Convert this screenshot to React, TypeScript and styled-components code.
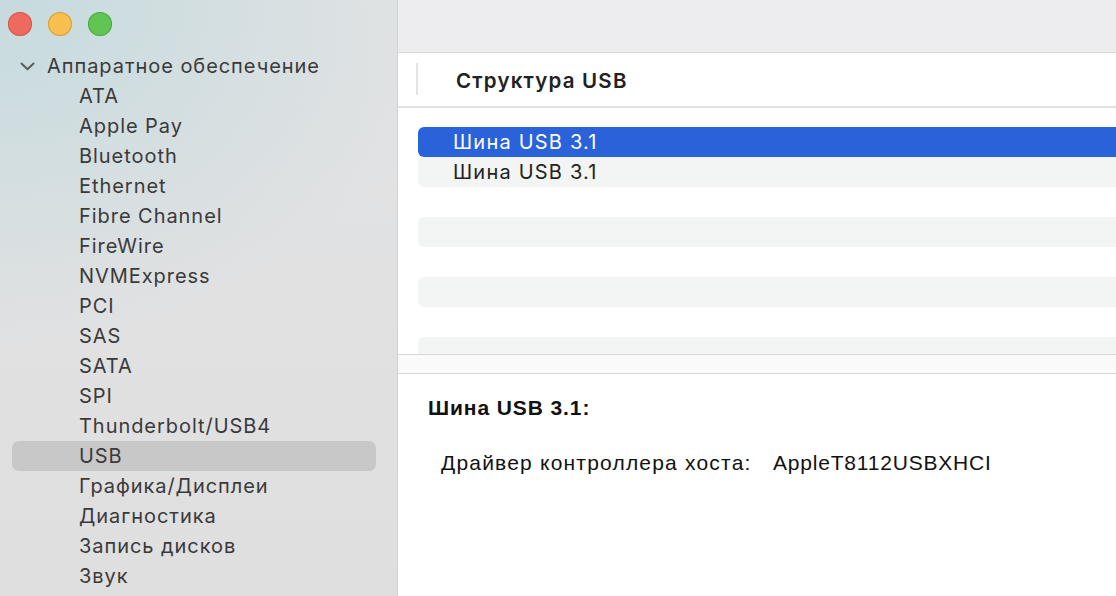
import React from "react";
import styled, { createGlobalStyle } from "styled-components";

const Global = createGlobalStyle`
  html, body { margin: 0; padding: 0; width: 1116px; height: 596px; overflow: hidden; }
  body { font-family: Inter, "Noto Sans", sans-serif; -webkit-font-smoothing: antialiased; }
  #root { width: 1116px; height: 596px; }
`;

const Window = styled.div`
  display: flex;
  width: 1116px;
  height: 596px;
  overflow: hidden;
  background: #fff;
`;

const Sidebar = styled.aside`
  width: 397px;
  flex: none;
  border-right: 1px solid #d2d2d3;
  background:
    radial-gradient(ellipse 440px 340px at 0% 0%, rgba(196, 218, 222, 0.95), rgba(196, 218, 222, 0) 100%),
    linear-gradient(180deg, #e2e3e4 0%, #dfdfe0 100%);
  display: flex;
  flex-direction: column;
`;

const Lights = styled.div`
  display: flex;
  gap: 16px;
  padding: 12px 0 0 8px;
  height: 51px;
  box-sizing: border-box;
  flex: none;
`;

const Light = styled.span<{ $c: string; $b: string }>`
  width: 24px;
  height: 24px;
  border-radius: 50%;
  background: ${(p) => p.$c};
  box-shadow: inset 0 0 0 1px ${(p) => p.$b};
`;

const GroupRow = styled.div`
  height: 30px;
  flex: none;
  display: flex;
  align-items: center;
  padding-left: 20px;
  gap: 12px;
  color: #3a3a3a;
  font-size: 20px;
  letter-spacing: 0.95px;
`;

const Item = styled.div<{ $sel?: boolean }>`
  height: 30px;
  flex: none;
  margin: 0 21px 0 12px;
  padding-left: 67px;
  display: flex;
  align-items: center;
  border-radius: 7px;
  color: #3a3a3a;
  font-size: 20px;
  letter-spacing: 0.95px;
  background: ${(p) => (p.$sel ? "#c8c8c9" : "transparent")};
`;

const Main = styled.main`
  flex: 1;
  display: flex;
  flex-direction: column;
  min-width: 0;
`;

const Toolbar = styled.div`
  height: 52px;
  flex: none;
  background: #ededef;
  border-bottom: 1px solid #d8d8d9;
`;

const HeaderRow = styled.div`
  height: 55px;
  flex: none;
  display: flex;
  align-items: center;
  padding: 2px 0 0 18px;
  border-bottom: 2px solid #e2e2e2;
  box-sizing: border-box;
`;

const Divider = styled.span`
  width: 2px;
  height: 32px;
  margin-top: -4px;
  background: #e3e3e3;
  margin-right: 38px;
`;

const HeaderTitle = styled.span`
  font-weight: 600;
  font-size: 20.5px;
  letter-spacing: 1.2px;
  color: #222;
`;

const List = styled.div`
  flex: 1;
  overflow: hidden;
  padding: 19px 0 0 20px;
  display: flex;
  flex-direction: column;
`;

const Row = styled.div<{ $sel?: boolean; $alt?: boolean }>`
  height: 30px;
  flex: none;
  margin-right: -20px;
  padding-left: 35px;
  display: flex;
  align-items: center;
  border-radius: 6px;
  font-size: 20px;
  letter-spacing: 1.2px;
  color: ${(p) => (p.$sel ? "#fff" : "#222")};
  background: ${(p) => (p.$sel ? "#2962d9" : p.$alt ? "#f3f4f4" : "transparent")};
`;

const Splitter = styled.div`
  height: 18px;
  flex: none;
  background: #fafafa;
  border-top: 1px solid #d6d6d6;
  border-bottom: 1px solid #d6d6d6;
`;

const Detail = styled.div`
  height: 222px;
  flex: none;
  padding: 22px 0 0 30px;
  box-sizing: border-box;
  font-family: "Liberation Sans", Arial, sans-serif;
  color: #111;
`;

const DetailTitle = styled.div`
  font-weight: 700;
  font-size: 21px;
  letter-spacing: 0.9px;
  height: 24px;
  line-height: 24px;
`;

const Prop = styled.div`
  display: flex;
  margin: 31px 0 0 13px;
  font-size: 21px;
  line-height: 24px;
`;

const PropKey = styled.span`
  width: 332px;
  flex: none;
  letter-spacing: 1.2px;
`;

const PropValue = styled.span`
  letter-spacing: 0.8px;
`;

const Chevron = () => (
  <svg width="15" height="9" viewBox="0 0 15 9" fill="none">
    <path d="M1.5 1.5 L7.5 7.3 L13.5 1.5" stroke="#5c5c5c" strokeWidth="2" strokeLinecap="round" strokeLinejoin="round" />
  </svg>
);

const items = [
  "ATA",
  "Apple Pay",
  "Bluetooth",
  "Ethernet",
  "Fibre Channel",
  "FireWire",
  "NVMExpress",
  "PCI",
  "SAS",
  "SATA",
  "SPI",
  "Thunderbolt/USB4",
  "USB",
  "Графика/Дисплеи",
  "Диагностика",
  "Запись дисков",
  "Звук",
];

export default function App() {
  const rows = [0, 1, 2, 3, 4, 5, 6, 7, 8];
  return (
    <>
      <Global />
      <Window>
        <Sidebar>
          <Lights>
            <Light $c="#ee6a5f" $b="#d5574d" />
            <Light $c="#f6bf4f" $b="#d9a03b" />
            <Light $c="#61c554" $b="#4ea944" />
          </Lights>
          <GroupRow>
            <Chevron />
            <span>Аппаратное обеспечение</span>
          </GroupRow>
          {items.map((t) => (
            <Item key={t} $sel={t === "USB"}>
              {t}
            </Item>
          ))}
        </Sidebar>
        <Main>
          <Toolbar />
          <HeaderRow>
            <Divider />
            <HeaderTitle>Структура USB</HeaderTitle>
          </HeaderRow>
          <List>
            {rows.map((i) => (
              <Row key={i} $sel={i === 0} $alt={i % 2 === 1}>
                {i < 2 ? "Шина USB 3.1" : ""}
              </Row>
            ))}
          </List>
          <Splitter />
          <Detail>
            <DetailTitle>Шина USB 3.1:</DetailTitle>
            <Prop>
              <PropKey>Драйвер контроллера хоста:</PropKey>
              <PropValue>AppleT8112USBXHCI</PropValue>
            </Prop>
          </Detail>
        </Main>
      </Window>
    </>
  );
}
